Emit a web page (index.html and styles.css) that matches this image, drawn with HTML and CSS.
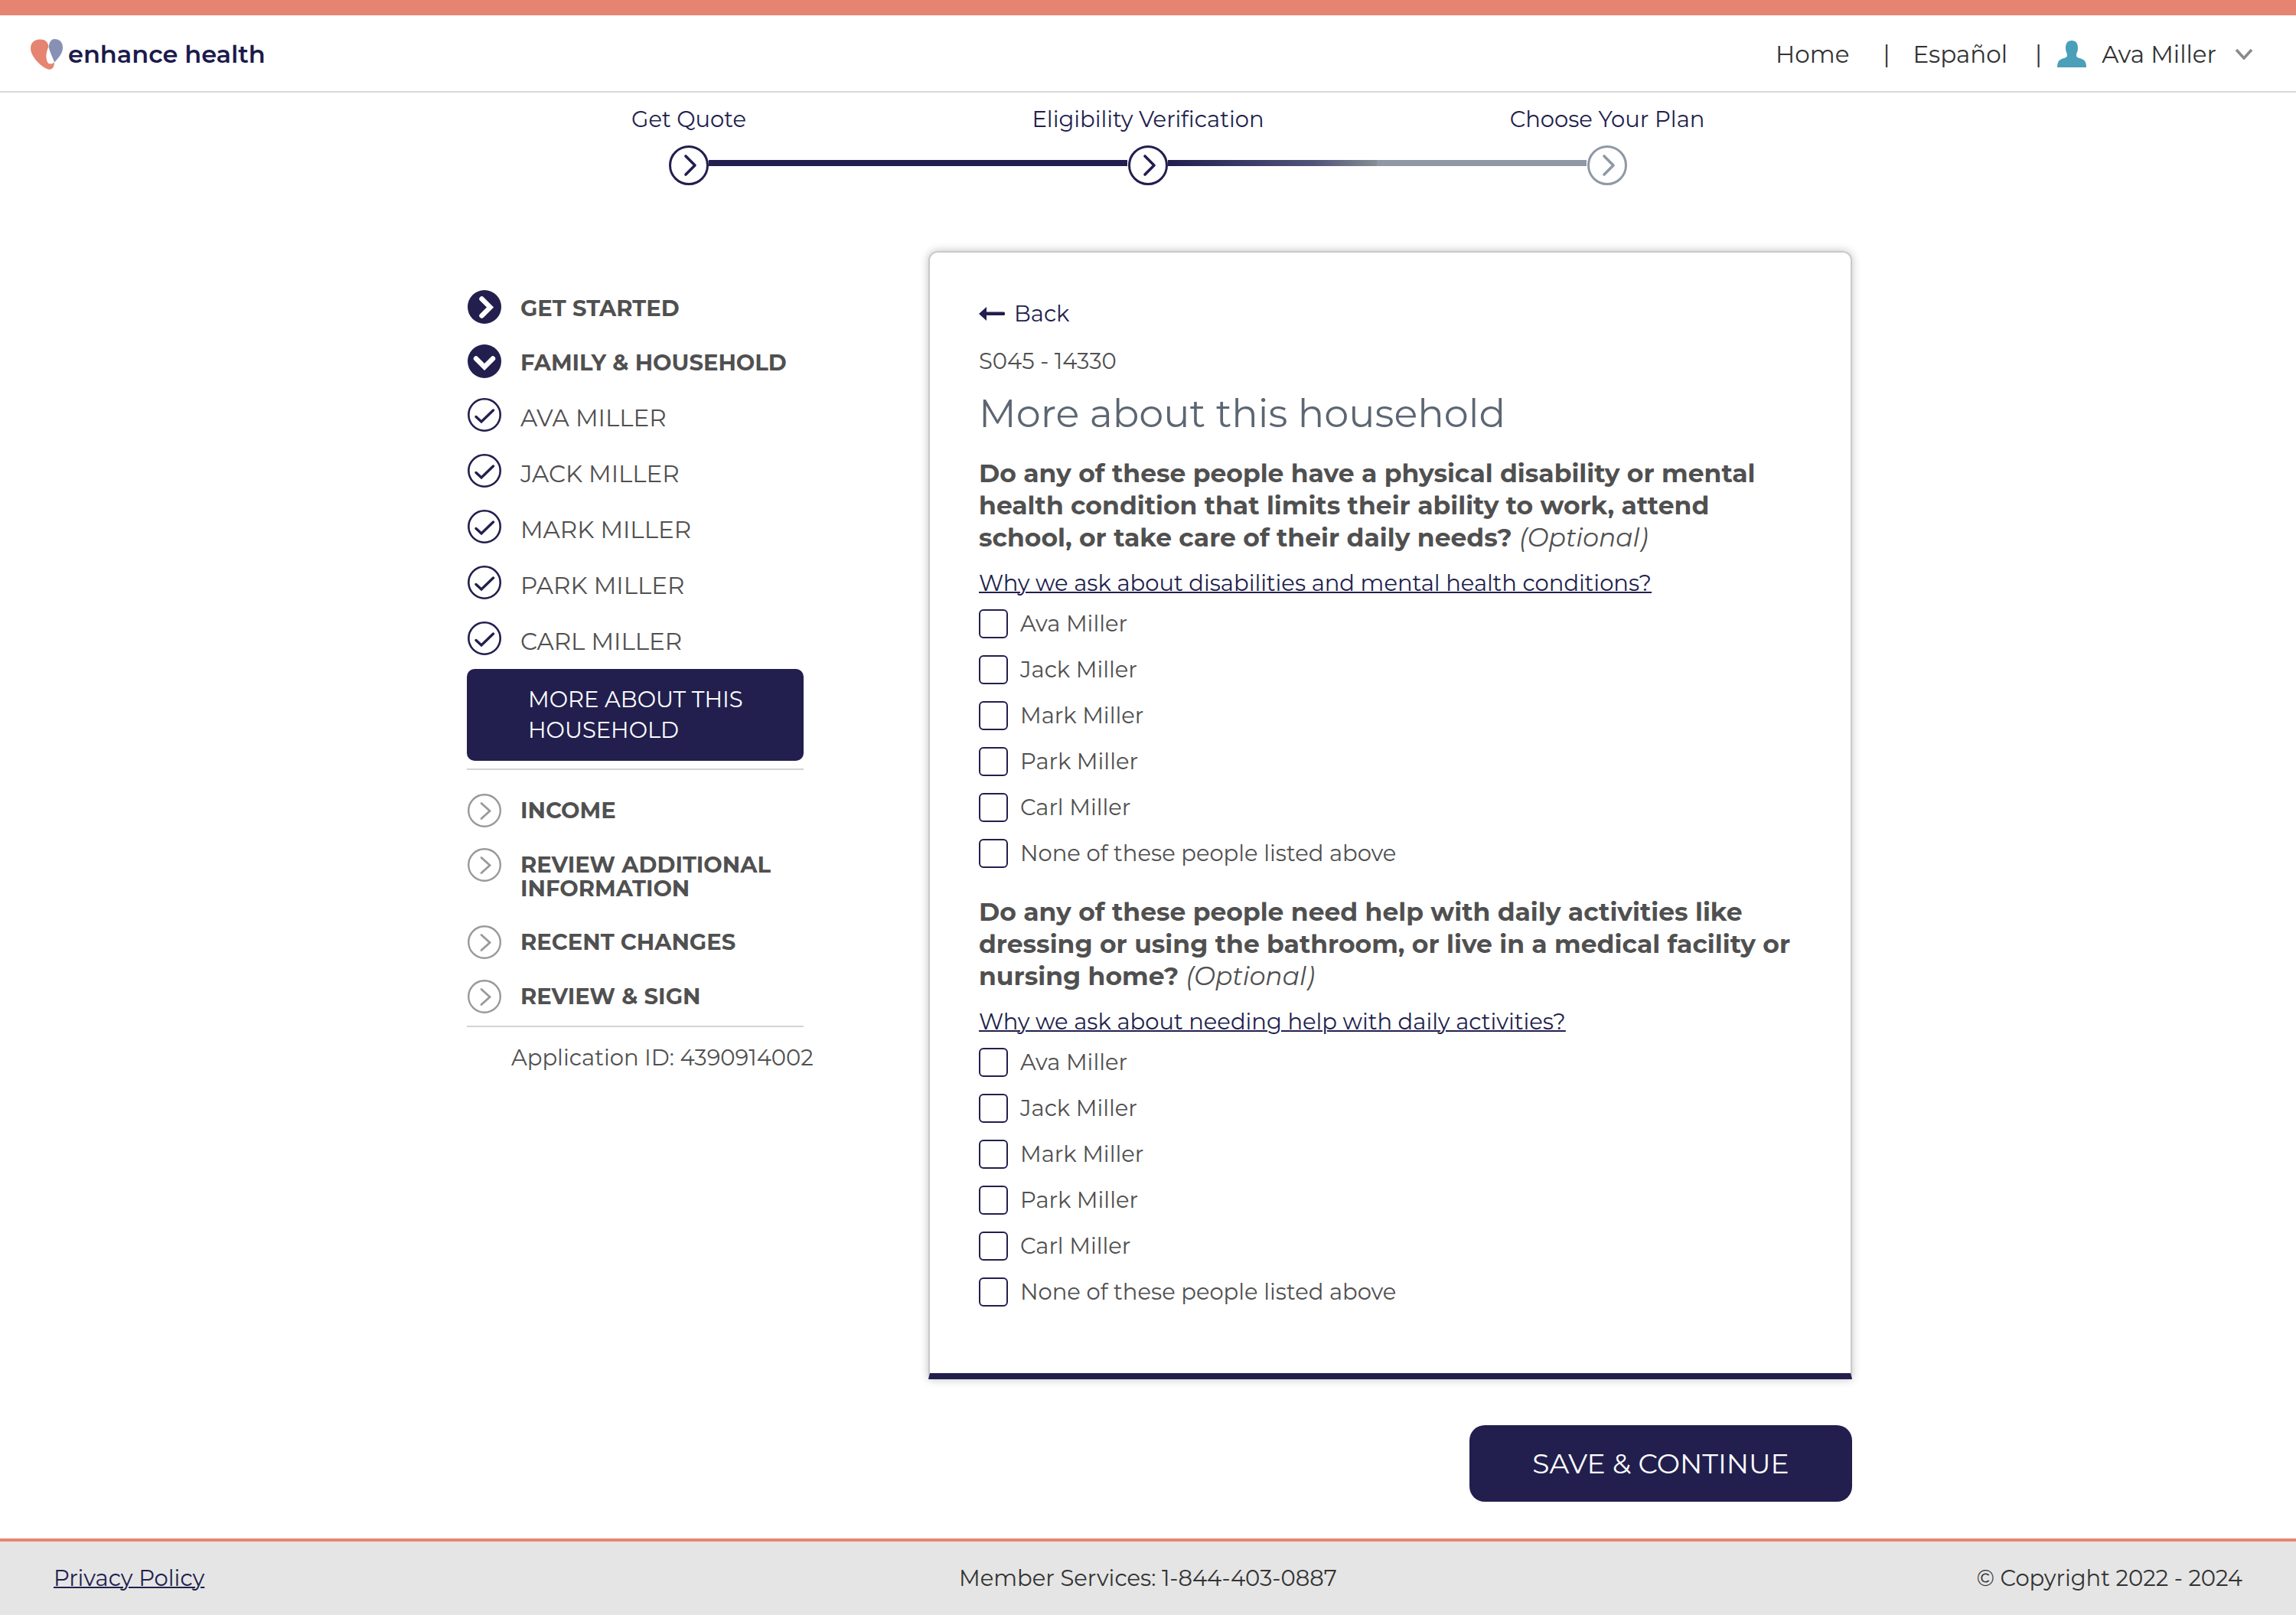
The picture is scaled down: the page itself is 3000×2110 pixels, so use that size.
FILE: index.html
```html
<!DOCTYPE html>
<html lang="en">
<head>
<meta charset="utf-8">
<title>More about this household - enhance health</title>
<meta name="viewport" content="width=device-width, initial-scale=1">
<link rel="stylesheet" href="styles.css">
</head>
<body>
<svg class="sprite" aria-hidden="true">
  <symbol id="step" viewBox="0 0 52 52"><circle cx="26" cy="26" r="24.5" fill="#fff" stroke="currentColor" stroke-width="3"/><path d="M22 14l12 12-12 12" fill="none" stroke="currentColor" stroke-width="3.6" stroke-linecap="round" stroke-linejoin="round"/></symbol>
  <symbol id="solid-right" viewBox="0 0 44 44"><circle cx="22" cy="22" r="22" fill="currentColor"/><path d="M18.500 11.500L29.500 22.500L18.500 33.500" fill="none" stroke="#fff" stroke-width="6.500" stroke-linecap="round" stroke-linejoin="miter"/></symbol>
  <symbol id="solid-down" viewBox="0 0 44 44"><circle cx="22" cy="22" r="22" fill="currentColor"/><path d="M11 18.500L22 29.500L33 18.500" fill="none" stroke="#fff" stroke-width="6.500" stroke-linecap="round" stroke-linejoin="miter"/></symbol>
  <symbol id="done" viewBox="0 0 44 44"><circle cx="22" cy="22" r="20.700" fill="none" stroke="currentColor" stroke-width="2.600"/><path d="M11 24.500l7 6.500L33.500 16" fill="none" stroke="currentColor" stroke-width="3.400" stroke-linecap="round" stroke-linejoin="miter"/></symbol>
  <symbol id="next" viewBox="0 0 44 44"><circle cx="22" cy="22" r="20.800" fill="none" stroke="currentColor" stroke-width="2.400"/><path d="M18 12.500L29 22.500L18 32.500" fill="none" stroke="currentColor" stroke-width="2.800" stroke-linecap="round"/></symbol>
</svg>

<header class="header">
  <a class="brand" href="#">
    <svg class="brand-mark" viewBox="0 0 42 40" aria-hidden="true">
      <path d="M12 .5C20 0 23 5 23.500 10C20 17 19.500 25 22 30C24 33.500 28 33 31 30.500C31 37 28 40 24 39.800C15 38 0 23 0 12.500C0 5 4 1 12 .500Z" fill="#e58571"/>
      <path d="M31 0C38 0 42 4.500 42 11C42 19 36 25 31 30.500C29.500 25 25 17 23.800 11C24 4 27 0 31 0Z" fill="#8790b5"/>
    </svg>
    <span>enhance health</span>
  </a>
  <nav class="top-nav" aria-label="Main">
    <a class="home" href="#">Home</a>
    <span class="bar">|</span>
    <a class="language" href="#">Español</a>
    <span class="bar">|</span>
    <button class="account" type="button">
      <svg class="avatar" viewBox="0 0 38 35" aria-hidden="true"><path d="M19 0c6 0 8 4 8 10 0 5-2 6-2 9 0 2.500 1 3 4 4 6 1.500 9 4 9 12H0c0-8 3-10.500 9-12 3-1 4-1.500 4-4 0-3-2-4-2-9C11 4 13 0 19 0z" fill="#4ba0b9"/></svg>
      <span>Ava Miller</span>
      <svg class="caret" viewBox="0 0 24 15" aria-hidden="true"><path d="M2 2l10 11L22 2" fill="none" stroke="#8b8b8b" stroke-width="3.600"/></svg>
    </button>
  </nav>
</header>

<ol class="steps">
  <li class="step"><span>Get Quote</span><svg class="step-icon"><use href="#step"/></svg></li>
  <li class="step current"><span>Eligibility Verification</span><svg class="step-icon"><use href="#step"/></svg></li>
  <li class="step upcoming"><span>Choose Your Plan</span><svg class="step-icon"><use href="#step"/></svg></li>
</ol>

<main class="main">
  <nav class="sidebar" aria-label="Application">
    <ul class="sections">
      <li><a class="section" href="#"><svg class="icon"><use href="#solid-right"/></svg><span>GET STARTED</span></a></li>
      <li><a class="section" href="#"><svg class="icon"><use href="#solid-down"/></svg><span>FAMILY &amp; HOUSEHOLD</span></a></li>
    </ul>
    <ul class="people">
      <li><a class="person" href="#"><svg class="icon"><use href="#done"/></svg><span>AVA MILLER</span></a></li>
      <li><a class="person" href="#"><svg class="icon"><use href="#done"/></svg><span>JACK MILLER</span></a></li>
      <li><a class="person" href="#"><svg class="icon"><use href="#done"/></svg><span>MARK MILLER</span></a></li>
      <li><a class="person" href="#"><svg class="icon"><use href="#done"/></svg><span>PARK MILLER</span></a></li>
      <li><a class="person" href="#"><svg class="icon"><use href="#done"/></svg><span>CARL MILLER</span></a></li>
    </ul>
    <a class="active" href="#" aria-current="page">MORE ABOUT THIS HOUSEHOLD</a>
    <ul class="sections later">
      <li><a class="section" href="#"><svg class="icon"><use href="#next"/></svg><span>INCOME</span></a></li>
      <li><a class="section" href="#"><svg class="icon"><use href="#next"/></svg><span>REVIEW ADDITIONAL INFORMATION</span></a></li>
      <li><a class="section" href="#"><svg class="icon"><use href="#next"/></svg><span>RECENT CHANGES</span></a></li>
      <li><a class="section" href="#"><svg class="icon"><use href="#next"/></svg><span>REVIEW &amp; SIGN</span></a></li>
    </ul>
    <p class="application">Application ID: 4390914002</p>
  </nav>

  <form class="form">
    <div class="card">
      <a class="back" href="#"><svg class="arrow" viewBox="0 0 34 18" aria-hidden="true"><path d="M0 9L10 0V6.500H32.500Q34 6.500 34 8V9.500Q34 11 32.500 11H10V18Z" fill="#221f4e"/></svg>Back</a>
      <p class="code">S045 - 14330</p>
      <h1 class="title">More about this household</h1>
      <fieldset class="question">
        <legend>Do any of these people have a physical disability or mental<br> health condition that limits their ability to work, attend<br> school, or take care of their daily needs? <em>(Optional)</em></legend>
        <a class="why" href="#">Why we ask about disabilities and mental health conditions?</a>
        <label class="choice"><input type="checkbox" name="disability"><span>Ava Miller</span></label>
        <label class="choice"><input type="checkbox" name="disability"><span>Jack Miller</span></label>
        <label class="choice"><input type="checkbox" name="disability"><span>Mark Miller</span></label>
        <label class="choice"><input type="checkbox" name="disability"><span>Park Miller</span></label>
        <label class="choice"><input type="checkbox" name="disability"><span>Carl Miller</span></label>
        <label class="choice"><input type="checkbox" name="disability"><span>None of these people listed above</span></label>
      </fieldset>
      <fieldset class="question">
        <legend>Do any of these people need help with daily activities like<br> dressing or using the bathroom, or live in a medical facility or<br> nursing home? <em>(Optional)</em></legend>
        <a class="why" href="#">Why we ask about needing help with daily activities?</a>
        <label class="choice"><input type="checkbox" name="help"><span>Ava Miller</span></label>
        <label class="choice"><input type="checkbox" name="help"><span>Jack Miller</span></label>
        <label class="choice"><input type="checkbox" name="help"><span>Mark Miller</span></label>
        <label class="choice"><input type="checkbox" name="help"><span>Park Miller</span></label>
        <label class="choice"><input type="checkbox" name="help"><span>Carl Miller</span></label>
        <label class="choice"><input type="checkbox" name="help"><span>None of these people listed above</span></label>
      </fieldset>
    </div>
    <button class="save" type="submit">SAVE &amp; CONTINUE</button>
  </form>
</main>

<footer class="footer">
  <a href="#">Privacy Policy</a>
  <span class="services">Member Services: 1-844-403-0887</span>
  <span class="copyright">© Copyright 2022 - 2024</span>
</footer>
</body>
</html>
```
FILE: styles.css
```css
:root {
  --navy: #221f4e;
  --coral: #e58571;
  --text: #505050;
  --rule: #d3d3d3;
}

* { box-sizing: border-box; }

body {
  display: flex;
  flex-direction: column;
  min-height: 100vh;
  margin: 0;
  background: #fff;
  color: var(--text);
  font: 400 29px/40px Montserrat, Inter, sans-serif;
}

a { color: inherit; text-decoration: none; }
button { font: inherit; cursor: pointer; }
ul, ol { margin: 0; padding: 0; list-style: none; }
.sprite { display: none; }

.header {
  display: flex;
  align-items: center;
  justify-content: space-between;
  height: 121px;
  padding: 2px 56px 0 40px;
  border-top: 20px solid var(--coral);
  border-bottom: 2px solid #d9d9d9;
  color: #333;
}

.brand {
  display: flex;
  align-items: center;
  gap: 7px;
  color: #1c1a4b;
  font-size: 32px;
  font-weight: 600;
}
.brand-mark { width: 42px; height: 40px; }

.top-nav { display: flex; align-items: center; font-size: 31px; }
.home { margin-right: 44px; }
.language { margin: 0 36px 0 30px; }
.account {
  display: flex;
  align-items: center;
  margin-left: 20px;
  padding: 0;
  border: 0;
  background: none;
  color: inherit;
}
.avatar { width: 38px; height: 35px; margin-right: 20px; }
.caret { width: 24px; height: 15px; margin-left: 24px; }

.steps {
  display: grid;
  grid-template-columns: repeat(3, 1fr);
  width: 60%;
  margin: 15px auto 0;
  color: var(--navy);
}
.step {
  position: relative;
  display: flex;
  flex-direction: column;
  align-items: center;
  gap: 14px;
}
.step-icon { width: 52px; height: 52px; color: var(--navy); }
.upcoming .step-icon { color: #8f99a5; }
.step:not(.upcoming)::after {
  content: "";
  position: absolute;
  top: 73px;
  left: calc(50% + 26px);
  width: calc(100% - 53px);
  height: 8px;
  background: var(--navy);
}
.step.current::after {
  background: linear-gradient(90deg, #221f4e, #51547a 35%, #868e93 50%, #8f99a5 50%);
}

.main {
  display: grid;
  grid-template-columns: 440px minmax(0, 1207px);
  justify-content: space-between;
  align-items: start;
  padding: 86px calc(20vw - 20px) 48px calc(20vw + 10px);
}

.sidebar { padding-top: 51px; }
.icon { flex: none; width: 44px; height: 44px; margin-left: 1px; color: var(--navy); }
.section, .person { display: flex; gap: 25px; }
.sections { display: grid; gap: 27px; }
.section { font-size: 29px; line-height: 31px; font-weight: 700; }
.section span { padding: 8px 0 4px; }
.people { display: grid; gap: 29px; padding-top: 26px; }
.person { font-size: 31px; line-height: 35px; }
.person span { padding-top: 9px; }
.active {
  display: block;
  margin-top: 18px;
  padding: 20px 60px 20px 80px;
  border-radius: 10px;
  background: var(--navy);
  color: #fff;
}
.later {
  margin-top: 10px;
  padding: 31px 0 16px;
  border-top: 2px solid var(--rule);
  border-bottom: 2px solid var(--rule);
}
.later .icon { color: #999; }
.later .section span { padding: 6px 0; }
.application { margin: 20px 0 0 58px; white-space: nowrap; }

.form { display: flex; flex-direction: column; align-items: flex-end; }
.card {
  width: 100%;
  padding: 60px 64px 65px;
  border: 2px solid #c9c9c9;
  border-bottom: 8px solid var(--navy);
  border-radius: 12px 12px 0 0;
  box-shadow: 0 0 12px rgba(0, 0, 0, .25);
}
.back { display: flex; align-items: center; gap: 12px; color: var(--navy); }
.arrow { width: 34px; height: 18px; }
.code { margin: 22px 0 0; }
.title {
  margin: 18px 0 27px;
  color: #5c6673;
  font-size: 51px;
  line-height: 60px;
  font-weight: 400;
}
.question { margin: 0 0 14px; padding: 0; border: 0; min-width: 0; }
.question:last-child { margin: 0; }
.question legend { padding: 0; font-size: 33px; line-height: 42px; font-weight: 700; white-space: nowrap; }
.question em { font-weight: 400; }
.why {
  display: block;
  margin: 19px 0 14px;
  color: var(--navy);
  text-decoration: underline;
  text-decoration-thickness: 2px;
}
.choice { display: flex; align-items: center; gap: 16px; height: 38px; margin-bottom: 22px; }
.choice input {
  appearance: none;
  width: 38px;
  height: 38px;
  margin: 0;
  border: 2px solid var(--navy);
  border-radius: 6px;
  background: #fff;
}
.save {
  width: 500px;
  height: 100px;
  margin-top: 60px;
  border: 0;
  border-radius: 20px;
  background: var(--navy);
  color: #fff;
  font-size: 36px;
}

.footer {
  display: grid;
  grid-template-columns: 1fr auto 1fr;
  align-items: center;
  height: 100px;
  margin-top: auto;
  padding: 0 70px;
  border-top: 4px solid var(--coral);
  background: #e5e5e5;
  color: #333;
}
.footer a { color: var(--navy); text-decoration: underline; text-decoration-thickness: 2px; }
.copyright { text-align: right; }
```
